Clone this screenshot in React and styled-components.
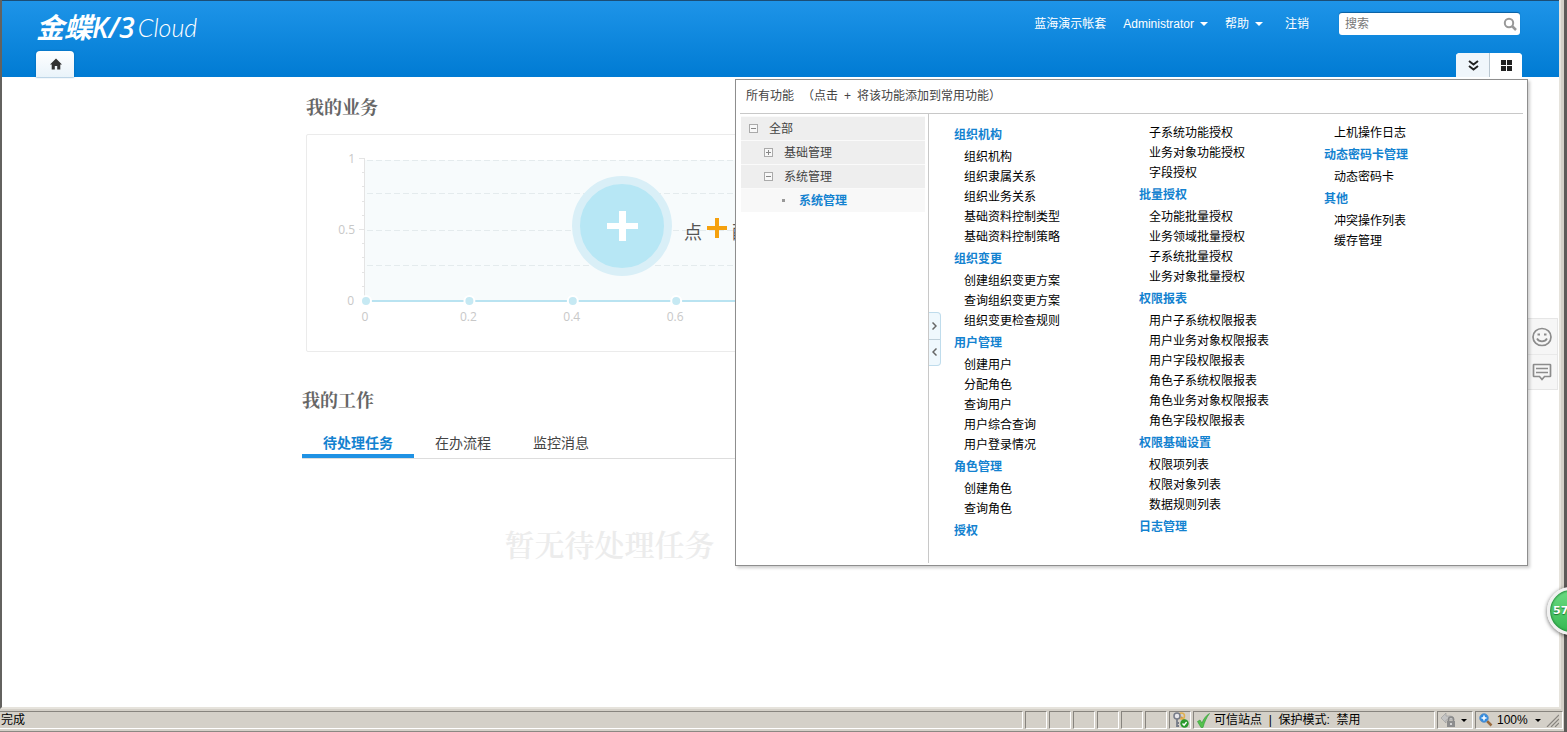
import React from 'react';
import styled, { createGlobalStyle } from 'styled-components';

const GlobalStyle = createGlobalStyle`
  * { box-sizing: border-box; }
  body {
    margin: 0;
    background: #fff;
    color: #444;
    font: 12px/20px "Liberation Sans", "Noto Sans CJK SC", sans-serif;
  }
  a { color: inherit; text-decoration: none; }
  button {
    border: 0;
    padding: 0;
    background: none;
    color: inherit;
    font: inherit;
    cursor: pointer;
  }
  ul { margin: 0; padding: 0; list-style: none; }
  svg { display: block; flex-shrink: 0; }
`;

const Screen = styled.div`
  position: relative;
  overflow: hidden;
`;

const Window = styled.div`
  display: flex;
  flex-direction: column;
  min-height: 100vh;
  background: #d4d0c8;
  border-right: 3px solid #5c5a58;
`;

const Page = styled.div`
  position: relative;
  flex: 1;
  margin-right: 3px;
  background: #fff;
  border-left: 2px solid #63625f;
  border-right: 2px solid #e6e3dc;
  border-bottom: 2px solid #e6e3dc;
`;

/* ---------- header ---------- */

const Header = styled.header`
  display: flex;
  flex-direction: column;
  justify-content: space-between;
  height: 77px;
  padding: 0 37px 0 34px;
  border-top: 1px solid #1b4d75;
  background: linear-gradient(#1e94e8, #007bd3);
`;

const HeaderRow = styled.div`
  display: flex;
  justify-content: space-between;
  align-items: ${(p) => p.$align || 'center'};
`;

const TopRow = styled(HeaderRow)`
  height: 46px;
  padding-right: 2px;
`;

const Logo = styled.h1`
  display: flex;
  align-items: center;
  gap: 3px;
  margin: 5px 0 0;
  color: #fff;
  font-size: 28px;
  line-height: 32px;
  font-style: italic;
  font-weight: 400;
`;

const LogoName = styled.span`
  font-family: "Open Sans", "Noto Sans CJK SC", sans-serif;
  font-size: 28px;
  font-weight: 600;
  b { font-weight: 700; }
`;

const LogoProduct = styled.span`
  font-family: Lato, sans-serif;
  font-size: 25px;
  font-weight: 300;
`;

const Nav = styled.nav`
  display: flex;
  align-items: center;
  gap: 17px;
  color: #fff;
`;

const NavLink = styled.a`
  display: flex;
  align-items: center;
  gap: 6px;
  margin-left: ${(p) => (p.$spaced ? '5px' : '0')};
`;

const Caret = styled.span`
  border: ${(p) => p.$size || 4}px solid transparent;
  border-top-color: ${(p) => p.$color || '#fff'};
  border-bottom: 0;
`;

const Search = styled.label`
  display: flex;
  align-items: center;
  width: 181px;
  height: 22px;
  margin-left: 13px;
  padding: 0 3px 0 6px;
  border-radius: 3px;
  background: #fff;
  box-shadow: 0 -1px 1px #0a5f9f;
  input {
    flex: 1;
    min-width: 0;
    padding: 0;
    border: 0;
    outline: 0;
    background: none;
    font: inherit;
  }
  input::placeholder { color: #777; }
`;

const HomeTab = styled.button`
  display: grid;
  place-items: center;
  width: 38px;
  height: 26px;
  padding-left: 2px;
  border-radius: 4px 4px 0 0;
  background: linear-gradient(#fff, #e9f3fa);
  box-shadow: 0 0 2px #0561a5;
`;

const CornerTabs = styled.div`
  display: flex;
  height: 24px;
  overflow: hidden;
  border-radius: 4px 4px 0 0;
  background: #fff;
`;

const CornerTab = styled.button`
  display: grid;
  place-items: center;
  width: 33px;
  background: ${(p) => (p.$active ? '#fff' : '#f0f6fb')};
  border-left: 1px solid ${(p) => (p.$active ? '#b9c6d0' : '#f0f6fb')};
`;

/* ---------- dashboard ---------- */

const Main = styled.main`
  max-width: 957px;
  margin: 0 auto;
`;

const Section = styled.section`
  padding: ${(p) => p.$pad || '0'};
`;

const SectionTitle = styled.h2`
  margin: 0;
  color: #666;
  font: 700 18px/28px "Noto Serif CJK SC", "Noto Sans CJK SC", serif;
`;

const ChartBox = styled.div`
  position: relative;
  margin-top: 14px;
  border: 1px solid #ebebeb;
  border-radius: 2px;
  overflow: hidden;
`;

const ChartHint = styled.div`
  position: absolute;
  top: 41px;
  left: 265px;
  display: flex;
  align-items: center;
  gap: 12px;
`;

const AddButton = styled.button`
  display: grid;
  place-items: center;
  width: 100px;
  height: 100px;
  border: 8px solid #d9eff7;
  border-radius: 50%;
  background: #b7e7f5;
`;

const HintText = styled.p`
  display: flex;
  align-items: center;
  gap: 5px;
  margin: 14px 0 0;
  font-size: 18px;
  line-height: 28px;
  color: #555;
  svg { margin-bottom: 10px; }
`;

const Tabs = styled.div`
  display: flex;
  max-width: 615px;
  height: 31px;
  margin-top: 15px;
  border-bottom: 1px solid #ddd;
`;

const Tab = styled.button`
  height: 30px;
  padding: 4px 21px 0;
  border-bottom: 4px solid ${(p) => (p.$active ? '#1f92e4' : 'transparent')};
  color: ${(p) => (p.$active ? '#1382d0' : '#444')};
  font-size: 14px;
  font-weight: ${(p) => (p.$active ? 700 : 400)};
`;

const Empty = styled.p`
  max-width: 615px;
  margin: 64px 0 0;
  color: #ececec;
  font: 600 30px/40px "Noto Serif CJK SC", "Noto Sans CJK SC", serif;
  text-align: center;
`;

/* ---------- function panel ---------- */

const Panel = styled.aside`
  position: absolute;
  top: 79px;
  right: 31px;
  width: 793px;
  padding: 0 4px 2px;
  border: 1px solid #8e8e8e;
  background: #fff;
  box-shadow: 2px 2px 3px rgba(0, 0, 0, 0.2);
`;

const PanelHead = styled.div`
  display: flex;
  gap: 8px;
  height: 34px;
  padding: 6px 6px 0;
  border-bottom: 1px solid #c8c8c8;
`;

const PanelHint = styled.span`
  display: flex;
  gap: 6px;
`;

const PanelBody = styled.div`
  display: flex;
`;

const Tree = styled.ul`
  width: 189px;
  padding: 2px 3px 0 1px;
  border-right: 1px solid #c8c8c8;
`;

const TreeRow = styled.li`
  display: flex;
  align-items: center;
  gap: 11px;
  height: 24px;
  padding-left: ${(p) => 8 + p.$level * 15}px;
  border-top: 1px solid #fafafa;
  background: ${(p) => (p.$leaf ? '#f8f8f8' : '#eee')};
  color: ${(p) => (p.$leaf ? '#1382d0' : '#444')};
  font-weight: ${(p) => (p.$leaf ? 700 : 400)};
`;

const Bullet = styled.span`
  width: 3px;
  height: 3px;
  margin: 0 3px;
  background: #999;
`;

const Columns = styled.div`
  position: relative;
  display: flex;
  flex: 1;
  padding: 9px 0 20px 25px;
`;

const Column = styled.div`
  width: 185px;
  color: #000;
`;

const GroupTitle = styled.h3`
  margin: 0;
  color: #1382d0;
  font-size: 12px;
  line-height: 24px;
`;

const GroupItem = styled.li`
  padding-left: 10px;
  line-height: 20px;
`;

const Splitter = styled.div`
  position: absolute;
  top: 198px;
  left: 0;
  display: flex;
  flex-direction: column;
  width: 12px;
  height: 54px;
  border: 1px solid #bfdcec;
  border-left: 0;
  border-radius: 0 4px 4px 0;
  background: #eff8fd;
  button {
    flex: 1;
    display: grid;
    place-items: center;
  }
  button + button { border-top: 1px solid #bfd0da; }
`;

/* ---------- floating parts ---------- */

const SideTools = styled.div`
  position: absolute;
  top: 318px;
  right: 1px;
  width: 31px;
  border: 1px solid #e6e6e6;
  border-left: 0;
  background: #f6f6f6;
  button {
    display: grid;
    place-items: center;
    width: 100%;
    height: 35px;
  }
  button + button { border-top: 1px solid #e9e9e9; }
`;

const Badge = styled.div`
  position: absolute;
  top: 587px;
  right: -28px;
  width: 48px;
  height: 48px;
  padding-left: 3px;
  border: 3px solid #f1f1f1;
  border-radius: 50%;
  background: linear-gradient(#6bdb83, #36b851);
  box-shadow: 0 1px 4px rgba(0, 0, 0, 0.6), inset 0 0 2px 1px #26873d;
  color: #fff;
  font: 700 11px/42px "DejaVu Sans", sans-serif;
  text-shadow: 0 1px 1px #1b6f31;
`;

/* ---------- browser status bar ---------- */

const StatusBar = styled.footer`
  display: flex;
  gap: 2px;
  height: 23px;
  padding: 2px 1px 2px 0;
  border-bottom: 1px solid #8b8883;
  color: #000;
`;

const StatusCell = styled.div`
  display: flex;
  align-items: center;
  gap: 4px;
  width: ${(p) => p.$width || 22}px;
  padding: 0 3px;
  border: 1px solid;
  border-color: #87847e #fff #fff #87847e;
  white-space: nowrap;
`;

const StatusText = styled.span`
  flex: 1;
  padding-left: 1px;
  border-top: 1px solid #87847e;
  border-right: 1px solid #fff;
  border-bottom: 1px solid #fff;
  line-height: 17px;
`;

const Push = styled.span`
  display: flex;
  align-items: center;
  gap: 5px;
  margin-left: auto;
`;

const tree = [
  { label: '全部', level: 0 },
  { label: '基础管理', level: 1, closed: true },
  { label: '系统管理', level: 1 },
  { label: '系统管理', level: 2, leaf: true },
];

const columns = [
  [
    { title: '组织机构', items: ['组织机构', '组织隶属关系', '组织业务关系', '基础资料控制类型', '基础资料控制策略'] },
    { title: '组织变更', items: ['创建组织变更方案', '查询组织变更方案', '组织变更检查规则'] },
    { title: '用户管理', items: ['创建用户', '分配角色', '查询用户', '用户综合查询', '用户登录情况'] },
    { title: '角色管理', items: ['创建角色', '查询角色'] },
    { title: '授权', items: [] },
  ],
  [
    { items: ['子系统功能授权', '业务对象功能授权', '字段授权'] },
    { title: '批量授权', items: ['全功能批量授权', '业务领域批量授权', '子系统批量授权', '业务对象批量授权'] },
    {
      title: '权限报表',
      items: ['用户子系统权限报表', '用户业务对象权限报表', '用户字段权限报表', '角色子系统权限报表', '角色业务对象权限报表', '角色字段权限报表'],
    },
    { title: '权限基础设置', items: ['权限项列表', '权限对象列表', '数据规则列表'] },
    { title: '日志管理', items: [] },
  ],
  [
    { items: ['上机操作日志'] },
    { title: '动态密码卡管理', items: ['动态密码卡'] },
    { title: '其他', items: ['冲突操作列表', '缓存管理'] },
  ],
];

const Toggle = ({ closed }) => (
  <svg width="9" height="9" viewBox="0 0 9 9" fill="none" stroke="#aaa" shapeRendering="crispEdges">
    <rect x="0.5" y="0.5" width="8" height="8" fill="#f8f8f8" />
    <path d={closed ? 'M2 4.5h5M4.5 2v5' : 'M2 4.5h5'} stroke="#888" />
  </svg>
);

const Chart = () => (
  <svg width="100%" height="216" fontFamily="Open Sans, sans-serif" fontSize="12" fill="#c8c8c8">
    <rect x="58" y="25" width="86%" height="141" fill="#f7fbfc" />
    <g stroke="#e4ebed" strokeDasharray="6 3">
      {[25.5, 58.5, 95.5, 130.5].map((y) => (
        <line key={y} x1="60" y1={y} x2="92%" y2={y} />
      ))}
    </g>
    <g stroke="#e4e4e4">
      <path d="M57.500 23v138M52 23.500h6M52 94.500h6" />
      {[37.5, 51.5, 66.5, 80.5, 108.5, 122.5, 137.5, 151.5].map((y) => (
        <line key={y} x1="55" y1={y} x2="58" y2={y} />
      ))}
    </g>
    <line x1="58" y1="166" x2="92%" y2="166" stroke="#b9e3f1" strokeWidth="2" />
    {[0, 0.2, 0.4, 0.6, 0.8, 1].map((v) => (
      <g key={v}>
        <circle cx={59 + v * 517} cy="166" r="5" fill="#c6e9f3" stroke="#fff" strokeWidth="2" />
        <text x={58 + v * 517} y="186" textAnchor="middle">{v}</text>
      </g>
    ))}
    <g textAnchor="end">
      <text x="48" y="28">1</text>
      <text x="48" y="99">0.5</text>
      <text x="47" y="170">0</text>
    </g>
  </svg>
);

const App = () => (
  <>
    <GlobalStyle />
    <Screen>
      <Window>
        <Page>
          <Header>
            <TopRow>
              <Logo>
                <LogoName><b>金蝶</b>K/3</LogoName>
                <LogoProduct>Cloud</LogoProduct>
              </Logo>
              <Nav>
                <NavLink href="#">蓝海演示帐套</NavLink>
                <NavLink href="#">Administrator<Caret /></NavLink>
                <NavLink href="#">帮助<Caret /></NavLink>
                <NavLink href="#" $spaced>注销</NavLink>
                <Search>
                  <input type="text" placeholder="搜索" aria-label="搜索" />
                  <svg width="14" height="14" viewBox="0 0 14 14" fill="none" stroke="#999" strokeWidth="2">
                    <circle cx="6" cy="6" r="4.200" />
                    <path d="M9 9l4 4" strokeWidth="2.500" />
                  </svg>
                </Search>
              </Nav>
            </TopRow>
            <HeaderRow $align="flex-end">
              <HomeTab aria-label="首页">
                <svg width="12" height="12" viewBox="0 0 12 12" fill="#333">
                  <path d="M6 0.500L12 6.500H10.300V11.500H7.200V8H4.800V11.500H1.700V6.500H0z" />
                </svg>
              </HomeTab>
              <CornerTabs>
                <CornerTab aria-label="展开">
                  <svg width="11" height="11" viewBox="0 0 11 11" fill="none" stroke="#222" strokeWidth="2">
                    <path d="M1 1l4.500 3.500L10 1M1 6l4.500 3.500L10 6" />
                  </svg>
                </CornerTab>
                <CornerTab $active aria-label="所有功能">
                  <svg width="11" height="11" viewBox="0 0 11 11" fill="#222">
                    <path d="M0 0h5v5H0zM6 0h5v5H6zM0 6h5v5H0zM6 6h5v5H6z" />
                  </svg>
                </CornerTab>
              </CornerTabs>
            </HeaderRow>
          </Header>

          <Main>
            <Section $pad="15px 4px 0">
              <SectionTitle>我的业务</SectionTitle>
              <ChartBox>
                <Chart />
                <ChartHint>
                  <AddButton aria-label="添加">
                    <svg width="31" height="30" viewBox="0 0 31 30" fill="#fff">
                      <path d="M12 0h7v12h12v6H19v12h-7V18H0v-6h12z" />
                    </svg>
                  </AddButton>
                  <HintText>
                    点
                    <svg width="20" height="20" viewBox="0 0 20 20" fill="#f5a10e">
                      <path d="M8 0h4v8h8v4h-8v8H8v-8H0V8h8z" />
                    </svg>
                    配置
                  </HintText>
                </ChartHint>
              </ChartBox>
            </Section>
            <Section $pad="33px 0 0">
              <SectionTitle>我的工作</SectionTitle>
              <Tabs role="tablist">
                <Tab role="tab" $active>待处理任务</Tab>
                <Tab role="tab">在办流程</Tab>
                <Tab role="tab">监控消息</Tab>
              </Tabs>
              <Empty>暂无待处理任务</Empty>
            </Section>
          </Main>

          <SideTools>
            <button aria-label="表情">
              <svg width="20" height="20" viewBox="0 0 20 20" fill="none" stroke="#8c8c8c" strokeWidth="1.700">
                <ellipse cx="10" cy="10" rx="9" ry="8.500" />
                <path d="M5 11.500c2 3.700 8 3.700 10 0" />
                <path d="M5.500 7.500h2.500M12 7.500h2.500" strokeWidth="2" />
              </svg>
            </button>
            <button aria-label="留言">
              <svg width="20" height="18" viewBox="0 0 20 18" fill="none" stroke="#8c8c8c" strokeWidth="1.700">
                <path d="M2 1.500h16q.5 0 .5.500v11q0 .5-.5.500h-5.500l-2.500 3-2.500-3H2q-.5 0-.5-.5v-11q0-.5.500-.5z" />
                <path d="M4 5.500h12M4 9.500h12" />
              </svg>
            </button>
          </SideTools>

          <Panel>
            <PanelHead>
              <span>所有功能</span>
              <PanelHint>
                <span>（点击</span>
                <span>+</span>
                <span>将该功能添加到常用功能）</span>
              </PanelHint>
            </PanelHead>
            <PanelBody>
              <Tree>
                {tree.map((t, i) => (
                  <TreeRow key={i} $level={t.level} $leaf={t.leaf}>
                    {t.leaf ? <Bullet /> : <button aria-label={t.label}><Toggle closed={t.closed} /></button>}
                    <a href="#">{t.label}</a>
                  </TreeRow>
                ))}
              </Tree>
              <Columns>
                {columns.map((groups, c) => (
                  <Column key={c}>
                    {groups.map((g, i) => (
                      <React.Fragment key={i}>
                        {g.title && <GroupTitle>{g.title}</GroupTitle>}
                        <ul>
                          {g.items.map((item) => (
                            <GroupItem key={item}><a href="#">{item}</a></GroupItem>
                          ))}
                        </ul>
                      </React.Fragment>
                    ))}
                  </Column>
                ))}
                <Splitter>
                  <button aria-label="向右">
                    <svg width="5" height="8" viewBox="0 0 5 8" fill="none" stroke="#666" strokeWidth="1.500">
                      <path d="M0.500 0.500L4 4L0.500 7.500" />
                    </svg>
                  </button>
                  <button aria-label="向左">
                    <svg width="5" height="8" viewBox="0 0 5 8" fill="none" stroke="#666" strokeWidth="1.500">
                      <path d="M4.500 0.500L1 4L4.500 7.500" />
                    </svg>
                  </button>
                </Splitter>
              </Columns>
            </PanelBody>
          </Panel>
        </Page>

        <StatusBar>
          <StatusText>完成</StatusText>
          {[0, 1, 2, 3, 4, 5].map((n) => <StatusCell key={n} />)}
          <StatusCell>
            <svg width="16" height="16" viewBox="0 0 16 16">
              <path d="M8 5l5 5" stroke="#d39b3b" strokeWidth="2" />
              <circle cx="8.500" cy="4" r="3" fill="none" stroke="#e0b050" strokeWidth="1.500" />
              <circle cx="4" cy="4" r="3" fill="#e6e6ea" stroke="#777c88" strokeWidth="1.500" />
              <path d="M4 7v8M4 11h2M4 14h2" stroke="#777c88" strokeWidth="1.800" />
              <circle cx="11.500" cy="11.500" r="4.200" fill="#2b9a2d" />
              <path d="M9.500 11.500l1.600 1.700 2.500-3.200" fill="none" stroke="#fff" strokeWidth="1.400" />
            </svg>
          </StatusCell>
          <StatusCell $width={242}>
            <svg width="13" height="15" viewBox="0 0 13 15">
              <path d="M0.500 8.500l2.500-1.500 2 3C6.500 6 9 2.500 12.500 0.500 9.500 4.500 7.500 9 6 14.500H4z" fill="#55c14d" stroke="#2e9a34" strokeWidth="0.600" />
            </svg>
            <span>可信站点&nbsp; |&nbsp; 保护模式:&nbsp; 禁用</span>
          </StatusCell>
          <StatusCell $width={36}>
            <svg width="16" height="16" viewBox="0 0 16 16">
              <path d="M0 6l5-5v3h4c3 0 4 2 4 4H5v3z" fill="#c4c4c4" stroke="#999" strokeWidth="0.600" />
              <path d="M7.500 9V7.500a2.500 2.500 0 015 0V9" fill="none" stroke="#888" strokeWidth="1.500" />
              <path d="M6 9h8v6H6z" fill="#8d8d8d" />
              <path d="M10 11v2" stroke="#eee" strokeWidth="1.500" />
            </svg>
            <Caret $color="#000" $size={3} />
          </StatusCell>
          <StatusCell $width={88}>
            <svg width="14" height="14" viewBox="0 0 14 14">
              <path d="M8 8l4.500 4.500" stroke="#9a6a3c" strokeWidth="2.500" />
              <circle cx="5" cy="5" r="4.300" fill="#2f8ae0" stroke="#6a97c5" />
              <path d="M5 2.500v5M2.500 5h5" stroke="#fff" strokeWidth="1.500" />
            </svg>
            <span>100%</span>
            <Push>
              <Caret $color="#000" $size={3} />
              <svg width="13" height="13" viewBox="0 0 13 13" stroke="#87847e" strokeWidth="1.200">
                <path d="M1 13L13 1M5 13l8-8M9 13l4-4" />
              </svg>
            </Push>
          </StatusCell>
        </StatusBar>
      </Window>

      <Badge>57</Badge>
    </Screen>
  </>
);

export default App;
